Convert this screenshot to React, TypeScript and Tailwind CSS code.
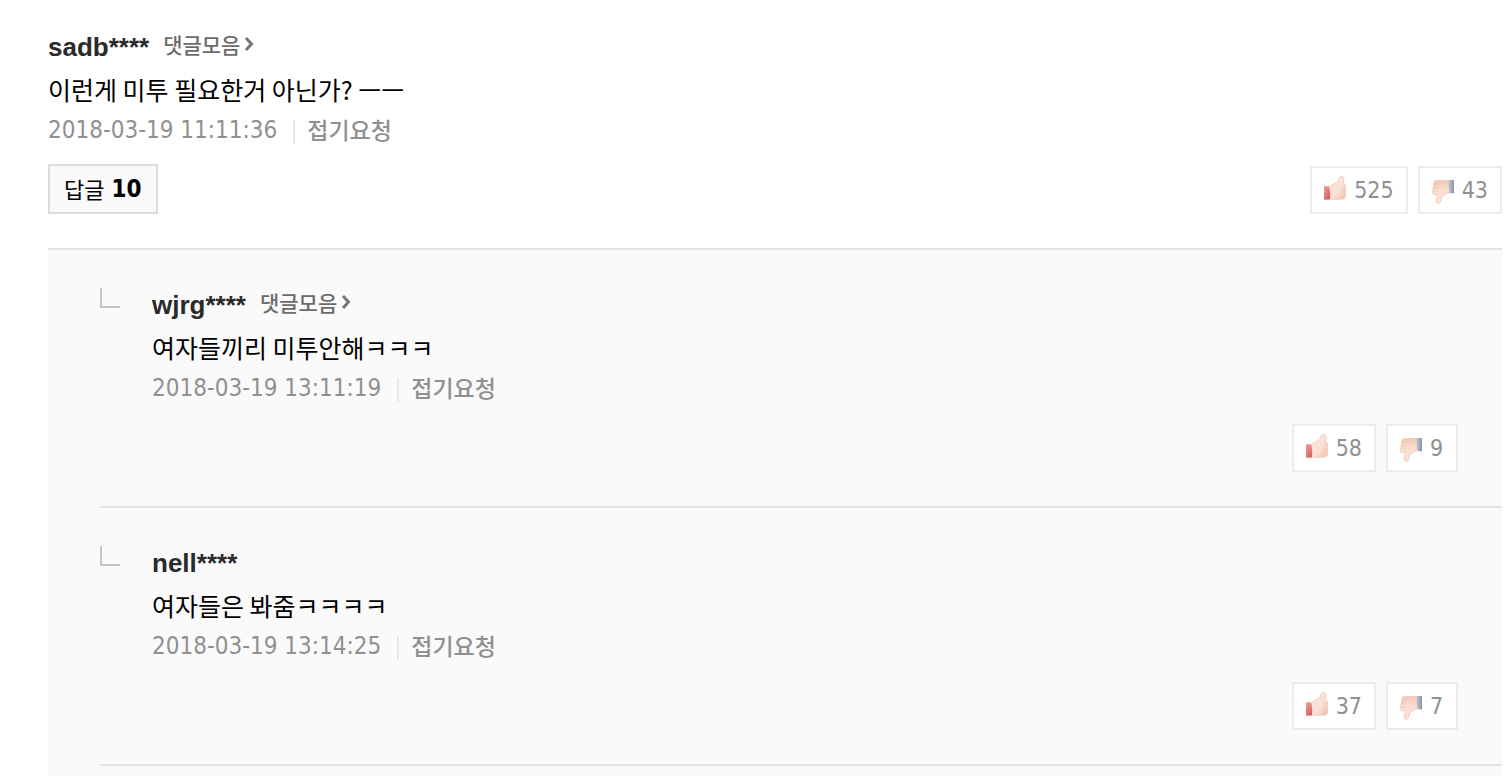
import React from "react";

type CommentData = {
  author: string;
  history: boolean;
  text: string;
  date: string;
  up: number;
  down: number;
};

const main: CommentData = {
  author: "sadb****",
  history: true,
  text: "이런게 미투 필요한거 아닌가? ㅡㅡ",
  date: "2018-03-19 11:11:36",
  up: 525,
  down: 43,
};

const replies: CommentData[] = [
  {
    author: "wjrg****",
    history: true,
    text: "여자들끼리 미투안해ㅋㅋㅋ",
    date: "2018-03-19 13:11:19",
    up: 58,
    down: 9,
  },
  {
    author: "nell****",
    history: false,
    text: "여자들은 봐줌ㅋㅋㅋㅋ",
    date: "2018-03-19 13:14:25",
    up: 37,
    down: 7,
  },
];

function ThumbUp() {
  return (
    <svg width="22" height="24" viewBox="0 0 22 24" className="mb-1" aria-hidden="true">
      <defs>
        <linearGradient id="upCuff" x1="0" y1="0" x2="0.6" y2="1">
          <stop offset="0" stopColor="#eda29b" />
          <stop offset="1" stopColor="#d9625c" />
        </linearGradient>
        <linearGradient id="upHand" x1="0" y1="0" x2="1" y2="1">
          <stop offset="0" stopColor="#fbe6dd" />
          <stop offset="0.6" stopColor="#fae0d5" />
          <stop offset="1" stopColor="#efbdab" />
        </linearGradient>
      </defs>
      <path
        d="M5 10.5 L8.5 8.5 L12 6.5 L14.5 4.5 L15 1.8 Q16 0.4 18 0.5 Q20.3 1 20 4 L19.4 7.5 L21 8.6 Q21.8 10 21.6 12 L21.7 15 L21.6 18 L21.4 21 Q20.8 23 18.5 23.2 L10 23.4 L5 22.8 Z"
        fill="url(#upHand)"
        stroke="#f1c8b9"
        strokeWidth="0.8"
      />
      <path d="M17 10.5 L21 10.8 M17.6 14 L21.4 14.2 M17.6 17.4 L21 17.6 M17 20.5 L20.5 20.6" stroke="#f0c3b2" strokeWidth="0.6" />
      <path d="M0 10 L5 10.4 Q6.8 16 6 23.4 L0 23.8 Z" fill="url(#upCuff)" />
    </svg>
  );
}

function ThumbDown() {
  return (
    <svg width="22" height="24" viewBox="0 0 22 24" className="mt-1" aria-hidden="true">
      <defs>
        <linearGradient id="downCuff" x1="0" y1="0" x2="1" y2="0">
          <stop offset="0" stopColor="#c3c4cc" />
          <stop offset="1" stopColor="#8896aa" />
        </linearGradient>
        <linearGradient id="downHand" x1="0" y1="0" x2="0" y2="1">
          <stop offset="0" stopColor="#f3c6b2" />
          <stop offset="0.45" stopColor="#fae0d3" />
          <stop offset="1" stopColor="#f9e2d8" />
        </linearGradient>
      </defs>
      <path
        d="M3.5 0.5 L17.5 0.3 L17.5 12.5 L13.5 14 L10 16.5 L8.8 21 Q8 23.6 6 23.4 Q3.6 23 4.2 20 L5.6 15 L1.8 14.8 Q0.2 14.4 0.6 12.2 L0.8 9 L1.6 5.5 L2 2.5 Q2.3 0.8 3.5 0.5 Z"
        fill="url(#downHand)"
        stroke="#f1c5b2"
        strokeWidth="0.8"
      />
      <path d="M2 4 L6 4.2 M1.4 7.4 L5.6 7.6 M1 10.8 L6 11.4" stroke="#efbfab" strokeWidth="0.6" />
      <path d="M17 0 L22 0 L22 13.4 L17.4 13 Q16 6 17 0 Z" fill="url(#downCuff)" />
    </svg>
  );
}

function Vote({ label, count, children }: { label: string; count: number; children: React.ReactNode }) {
  return (
    <button
      type="button"
      aria-label={`${label} ${count}`}
      className="flex h-12 min-w-[72px] items-center gap-2 border-2 border-[#ececec] bg-white px-3 font-['DejaVu_Sans_Condensed','DejaVu_Sans',sans-serif] text-[23px] leading-7 text-[#909090]"
    >
      {children}
      <span>{count}</span>
    </button>
  );
}

function Body({ data }: { data: CommentData }) {
  return (
    <>
      <div className="flex h-9 items-start gap-3.5">
        <span className="font-['Liberation_Sans',Arial,sans-serif] text-[26px] leading-9 font-bold text-[#2a2a2a]">
          {data.author}
        </span>
        {data.history && (
          <a href="#history" className="flex items-center gap-1 text-[21px] leading-[30px] font-medium text-[#6c6c6c]">
            댓글모음
            <svg width="11" height="16" viewBox="0 0 11 16" aria-hidden="true">
              <path d="M2 2 L7.5 8 L2 14" fill="none" stroke="#777" strokeWidth="3" />
            </svg>
          </a>
        )}
      </div>
      <p className="mt-0.5 text-[25px] leading-[44px] text-black">{data.text}</p>
      <div className="mt-px flex h-9 items-start text-[#909090]">
        <time className="font-['DejaVu_Sans_Condensed','DejaVu_Sans',sans-serif] text-2xl leading-9">{data.date}</time>
        <span className="mt-2 mr-3 ml-4 h-6 w-0.5 bg-[#e8e8e8]" />
        <a href="#fold" className="text-[23px] leading-[34px] font-medium">
          접기요청
        </a>
      </div>
    </>
  );
}

function Votes({ data }: { data: CommentData }) {
  return (
    <div className="flex gap-2.5">
      <Vote label="공감" count={data.up}>
        <ThumbUp />
      </Vote>
      <Vote label="비공감" count={data.down}>
        <ThumbDown />
      </Vote>
    </div>
  );
}

export default function App() {
  return (
    <main className="h-screen overflow-hidden bg-white pr-0.5 pl-12 font-['Noto_Sans_CJK_KR',sans-serif]">
      <article className="pt-[29px] pb-[34px]">
        <Body data={main} />
        <div className="mt-4 flex items-end justify-between">
          <button
            type="button"
            className="flex h-[50px] items-center gap-[7px] border-2 border-[#dcdcdc] bg-[#fafafa] px-3.5 text-[22px] leading-8 text-black"
          >
            <span className="pb-0.5">답글</span>
            <strong className="font-['DejaVu_Sans_Condensed','DejaVu_Sans',sans-serif] text-2xl font-bold">10</strong>
          </button>
          <Votes data={main} />
        </div>
      </article>
      <ul className="min-h-screen border-t-2 border-[#e2e2e2] bg-[#fafafa] pl-[52px]">
        {replies.map((reply) => (
          <li key={reply.author} className="flex items-start border-b-2 border-[#e5e5e5] pt-[37px] pb-[34px]">
            <span className="mt-px mr-8 h-5 w-5 shrink-0 border-b-2 border-l-2 border-[#c4c4c4]" />
            <div className="min-w-0 flex-1">
              <Body data={reply} />
              <div className="mt-[18px] flex justify-end pr-11">
                <Votes data={reply} />
              </div>
            </div>
          </li>
        ))}
      </ul>
    </main>
  );
}
